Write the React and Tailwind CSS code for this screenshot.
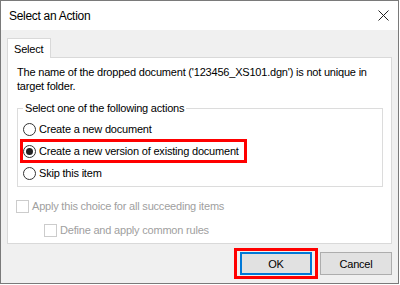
const FONT = { fontFamily: '"Liberation Sans", Arial, sans-serif' }

function Radio({ checked, label }) {
  return (
    <div className="flex items-center h-[22px] gap-[3px]">
      <span className="w-[13px] h-[13px] rounded-full border border-[#333] bg-white flex items-center justify-center shrink-0">
        {checked && <span className="w-[7px] h-[7px] rounded-full bg-[#222]" />}
      </span>
      <span className="text-[#000]">{label}</span>
    </div>
  )
}

function Check({ label, indent }) {
  return (
    <div className={`flex items-center h-[24px] gap-[3px] ${indent ? 'pl-[28px]' : ''}`}>
      <span className="w-[13px] h-[13px] border border-[#cccccc] bg-white shrink-0" />
      <span className="text-[#a0a0a0]">{label}</span>
    </div>
  )
}

export default function App() {
  return (
    <div className="w-[400px] h-[285px] bg-white text-[11px] leading-[14px] tracking-[-0.2px]" style={FONT}>
      <div className="w-[399px] h-[284px] border border-[#7a7a7a] flex flex-col">

        {/* Title bar */}
        <div className="h-[29px] bg-white flex items-center justify-between pl-[8px] pr-[8px] shrink-0">
          <span className="text-[12px] text-black tracking-[-0.3px]">Select an Action</span>
          <svg width="11" height="11" viewBox="0 0 11 11" className="mr-px">
            <path d="M0.5 0.5 L10.5 10.5 M10.5 0.5 L0.5 10.5" stroke="#222" strokeWidth="1" fill="none" />
          </svg>
        </div>

        {/* Body */}
        <div className="flex-1 bg-[#f0f0f0] px-[6px] pt-[8px]">
          <div className="flex">
            <div className="w-[44px] h-[20px] bg-white border border-b-0 border-[#d9d9d9] -mb-px relative z-10 flex items-center pl-[6px]">
              Select
            </div>
          </div>

          <div className="h-[187px] w-[385px] bg-white border border-[#d9d9d9] pt-[7px] pl-[9px] pr-[7px]">
            <p className="text-black">
              The name of the dropped document ('123456_XS101.dgn') is not unique in<br />target folder.
            </p>

            <fieldset className="mt-[8px] border border-[#dcdcdc] px-[5px] pb-[2px] h-[86px] w-[366px]">
              <legend className="px-[2px] text-black">Select one of the following actions</legend>
              <div className="pt-[3px]">
                <Radio label="Create a new document" />
                <div className="w-fit -ml-[3px] -my-px h-[24px] border-[3px] border-[#ff0000] pr-[5px]">
                  <div className="-mt-[2px]">
                    <Radio checked label="Create a new version of existing document" />
                  </div>
                </div>
                <Radio label="Skip this item" />
              </div>
            </fieldset>

            <div className="pt-[7px] -ml-px">
              <Check label="Apply this choice for all succeeding items" />
              <Check indent label="Define and apply common rules" />
            </div>
          </div>

          {/* Buttons */}
          <div className="flex justify-end items-center gap-[2px] mt-[4px]">
            <div className="border-[3px] border-[#ff0000] px-[3px] py-px">
              <button className="w-[72px] h-[23px] bg-[#e1e1e1] border-2 border-[#0078d7] text-black">OK</button>
            </div>
            <button className="w-[72px] h-[23px] bg-[#e1e1e1] border border-[#adadad] text-black">Cancel</button>
          </div>
        </div>
      </div>
    </div>
  )
}
